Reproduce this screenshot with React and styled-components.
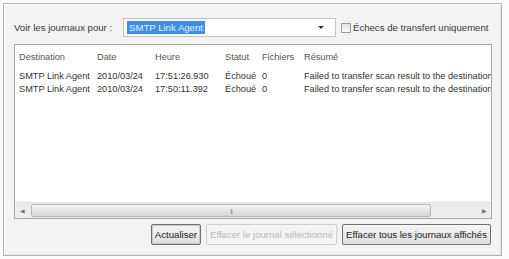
import React from 'react';
import styled, { createGlobalStyle } from 'styled-components';

const Global = createGlobalStyle`
  html, body {
    margin: 0;
    padding: 0;
    background: #fbfbfb;
  }
  body {
    font-family: "Liberation Sans", Arial, sans-serif;
    font-size: 9.6px;
    color: #3a3a3a;
  }
`

const Frame = styled.div`
  box-sizing: border-box;
  margin: 3px 0 0 3px;
  width: 499px;
  height: 253px;
  border: 1px solid #b4b4b4;
  box-shadow: inset 1px 1px 0 #fdfdfd, inset -1px -1px 0 #e2e2e2;
  background: #f3f3f3;
  padding: 14px 9px 0 10px;
  display: flex;
  flex-direction: column;
`

const TopRow = styled.div`
  display: flex;
  align-items: center;
  height: 19px;
`

const Label = styled.span`
  width: 109px;
  white-space: nowrap;
`

const Combo = styled.div`
  box-sizing: border-box;
  width: 213px;
  height: 19px;
  border: 1px solid #c4c4c4;
  background: #fff;
  display: flex;
  align-items: center;
  padding: 0 3px;
`

const Selected = styled.span`
  background: #3d8ee6;
  color: #e8f1fb;
  padding: 1px 2px;
  line-height: 11px;
`

const Arrow = styled.span`
  margin-left: auto;
  width: 0;
  height: 0;
  border-left: 3px solid transparent;
  border-right: 3px solid transparent;
  border-top: 3px solid #333;
  margin-right: 8px;
`

const Check = styled.span`
  box-sizing: border-box;
  width: 10px;
  height: 10px;
  margin-left: 5px;
  border: 1px solid #9a9a9a;
  background: linear-gradient(#e4e4e4, #fafafa);
`

const CheckText = styled.span`
  margin-left: 2px;
  white-space: nowrap;
`

const List = styled.div`
  box-sizing: border-box;
  margin-top: 7px;
  width: 478px;
  height: 175px;
  border: 1px solid #a8a8a8;
  background: #fff;
  display: flex;
  flex-direction: column;
  overflow: hidden;
`

const Rows = styled.div`
  flex: 1;
  overflow: hidden;
  font-size: 9.2px;
`

const Row = styled.div`
  display: grid;
  grid-template-columns: 78px 58px 70px 37px 42px 1fr;
  height: ${p => (p.head ? '24px' : '13px')};
  align-items: center;
  white-space: nowrap;
  color: ${p => (p.head ? '#555' : '#333')};
`

const Cell = styled.span`
  padding-left: 4px;
  overflow: hidden;
`

const HScroll = styled.div`
  height: 15px;
  display: flex;
  align-items: stretch;
  background: #ececec;
  border-top: 1px solid #e0e0e0;
`

const ScrollBtn = styled.span`
  width: 14px;
  display: flex;
  align-items: center;
  justify-content: center;
  color: #777;
  font-size: 6px;
`

const Track = styled.div`
  flex: 1;
  display: flex;
  padding: 1px 0;
`

const Thumb = styled.div`
  box-sizing: border-box;
  width: 400px;
  margin-left: 2px;
  border: 1px solid #b8b8b8;
  border-radius: 2px;
  background: linear-gradient(#f2f2f2, #d6d6d6);
  display: flex;
  align-items: center;
  justify-content: center;
  color: #888;
  font-size: 6px;
  letter-spacing: -1px;
`

const Buttons = styled.div`
  display: flex;
  justify-content: flex-end;
  gap: 5px;
  margin-top: 5px;
  width: 477px;
`

const Button = styled.button`
  box-sizing: border-box;
  height: 21px;
  padding: 0 3px;
  font-family: inherit;
  font-size: 9.6px;
  color: ${p => (p.disabled ? '#b8b8b8' : '#222')};
  background: ${p => (p.disabled ? '#f4f4f4' : 'linear-gradient(#f6f6f6, #dedede)')};
  border: 1px solid ${p => (p.disabled ? '#d0d0d0' : '#707070')};
  border-radius: 2px;
  box-shadow: ${p => (p.primary ? 'inset 0 0 0 1px #c9c9c9' : 'none')};
  white-space: nowrap;
`

const cols = ['Destination', 'Date', 'Heure', 'Statut', 'Fichiers', 'Résumé'];
const data = [
  ['SMTP Link Agent', '2010/03/24', '17:51:26.930', 'Échoué', '0', 'Failed to transfer scan result to the destination'],
  ['SMTP Link Agent', '2010/03/24', '17:50:11.392', 'Échoué', '0', 'Failed to transfer scan result to the destination'],
];

export default function App() {
  return (
    <>
      <Global />
      <Frame>
        <TopRow>
          <Label>Voir les journaux pour :</Label>
          <Combo>
            <Selected>SMTP Link Agent</Selected>
            <Arrow />
          </Combo>
          <Check />
          <CheckText>Échecs de transfert uniquement</CheckText>
        </TopRow>
        <List>
          <Rows>
            <Row head>
              {cols.map(c => <Cell key={c}>{c}</Cell>)}
            </Row>
            {data.map((r, i) => (
              <Row key={i}>
                {r.map((c, j) => <Cell key={j}>{c}</Cell>)}
              </Row>
            ))}
          </Rows>
          <HScroll>
            <ScrollBtn>◀</ScrollBtn>
            <Track>
              <Thumb>|||</Thumb>
            </Track>
            <ScrollBtn>▶</ScrollBtn>
          </HScroll>
        </List>
        <Buttons>
          <Button primary>Actualiser</Button>
          <Button disabled>Effacer le journal sélectionné</Button>
          <Button>Effacer tous les journaux affichés</Button>
        </Buttons>
      </Frame>
    </>
  );
}
